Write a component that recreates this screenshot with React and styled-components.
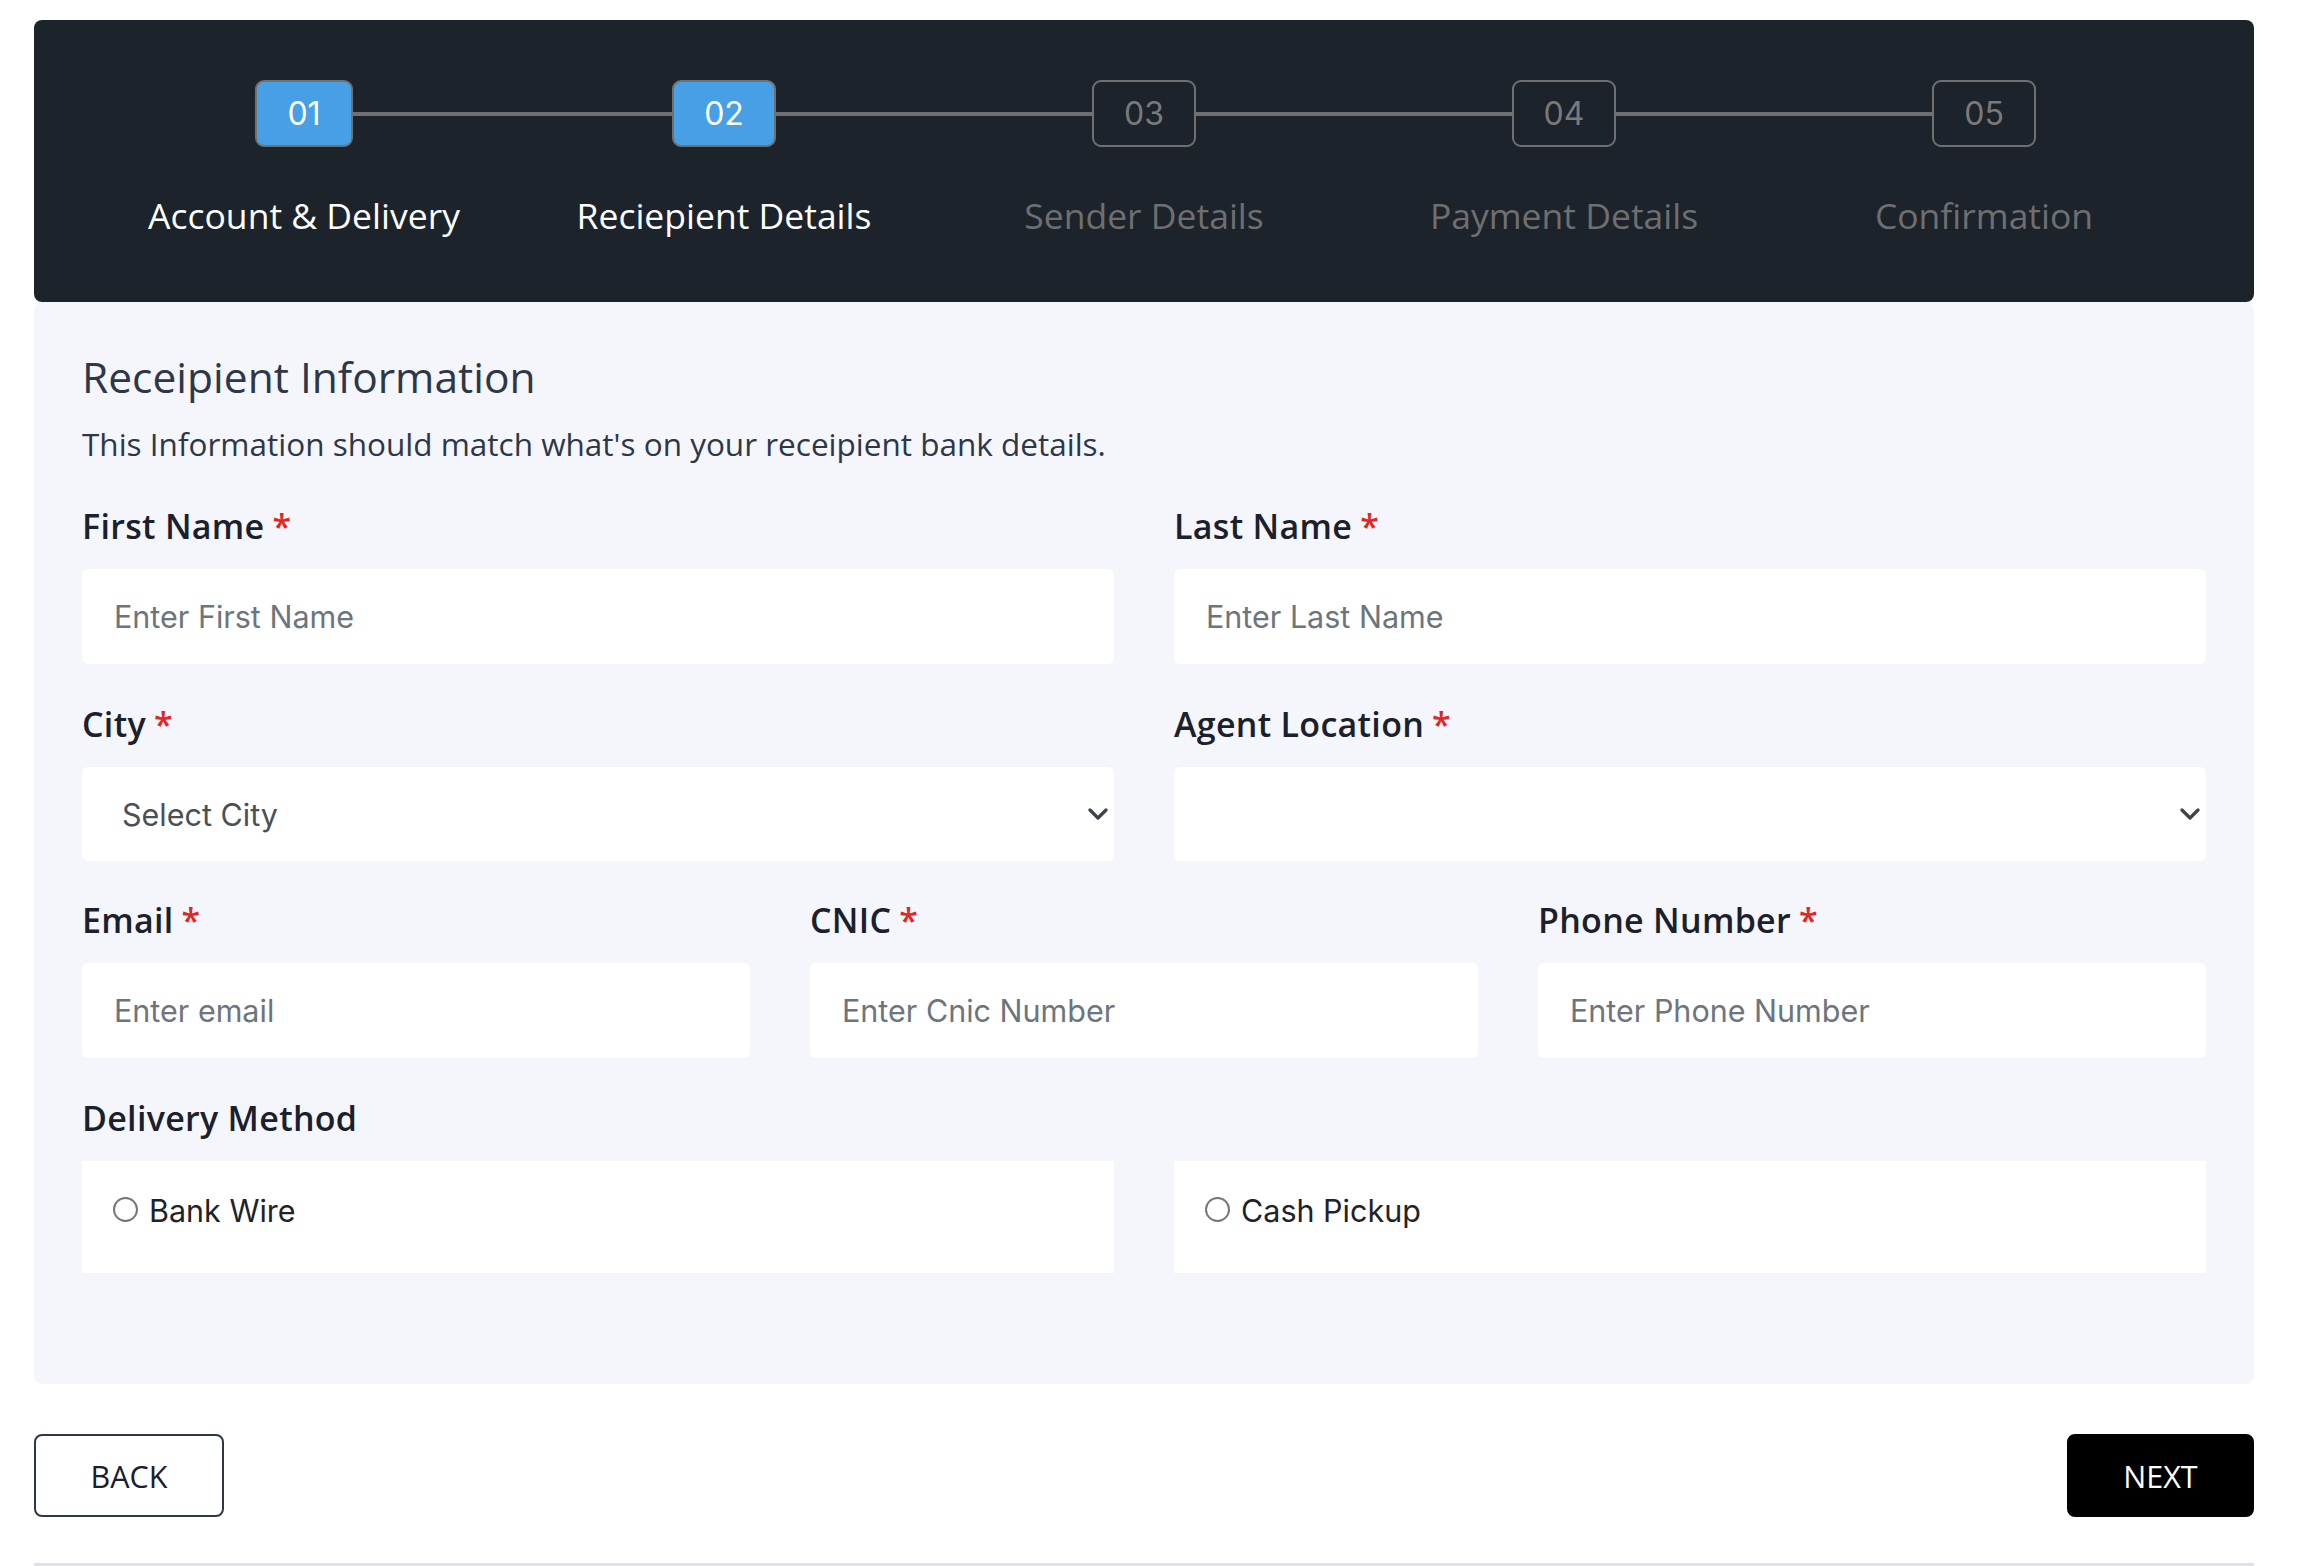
import React from "react";
import styled, { createGlobalStyle } from "styled-components";

const GlobalStyle = createGlobalStyle`
  html, body { margin: 0; padding: 0; background: #ffffff; }
  body { font-family: "Open Sans", "Noto Sans", sans-serif; }
  * { box-sizing: border-box; }
`;

const Page = styled.div`
  width: 2324px;
  padding: 20px 70px 0 34px;
`;

const Header = styled.div`
  background: #1c232b;
  border-radius: 8px;
  padding: 60px 60px 65px;
  display: grid;
  grid-template-columns: repeat(5, 1fr);
`;

const Step = styled.div`
  display: flex;
  flex-direction: column;
  align-items: center;
`;

const StepTrack = styled.div`
  display: flex;
  align-items: center;
  width: 100%;
`;

const Connector = styled.div`
  flex: 1;
  height: 4px;
  background: ${(p) => (p.$hidden ? "transparent" : "#707070")};
`;

const StepBox = styled.div`
  height: 67px;
  padding: 0 30px;
  border: 2px solid #707070;
  border-radius: 9px;
  display: flex;
  align-items: center;
  justify-content: center;
  font-family: "Inter", "Liberation Sans", sans-serif;
  font-size: 32px;
  color: ${(p) => (p.$active ? "#ffffff" : "#7a7a7a")};
  background: ${(p) => (p.$active ? "#47a0e5" : "transparent")};
`;

const StepLabel = styled.div`
  margin-top: 46px;
  font-size: 35.5px;
  line-height: 44px;
  color: ${(p) => (p.$active ? "#ffffff" : "#6f6f6f")};
  white-space: nowrap;
`;

const Panel = styled.div`
  background: #f5f6fb;
  border-radius: 8px;
  padding: 50px 48px 111px;
`;

const Title = styled.h2`
  margin: 0;
  font-size: 42.5px;
  line-height: 50px;
  font-weight: 400;
  color: #2d3748;
`;

const Subtitle = styled.p`
  margin: 22px 0 0;
  font-size: 31.5px;
  line-height: 40px;
  color: #2d3748;
`;

const Grid = styled.div`
  display: grid;
  grid-template-columns: repeat(${(p) => p.$cols}, 1fr);
  column-gap: 60px;
  margin-top: ${(p) => p.$top}px;
`;

const Field = styled.div`
  display: flex;
  flex-direction: column;
`;

const Label = styled.label`
  font-size: 34px;
  line-height: 40px;
  font-weight: 600;
  letter-spacing: 0.3px;
  color: #1a202c;
  margin-bottom: 23px;
  white-space: nowrap;
`;

const Req = styled.span`
  color: #e3261f;
  margin-left: 8px;
`;

const Input = styled.input`
  height: 95px;
  border: none;
  border-radius: 6px;
  background: #ffffff;
  padding: 0 32px;
  font-family: "Inter", "Liberation Sans", sans-serif;
  font-size: 30.5px;
  color: #212529;
  outline: none;
  &::placeholder { color: #6c757d; }
`;

const SelectWrap = styled.div`
  position: relative;
  height: 94px;
`;

const Select = styled.select`
  appearance: none;
  width: 100%;
  height: 100%;
  border: none;
  border-radius: 6px;
  background: #ffffff;
  padding: 0 40px;
  font-family: "Inter", "Liberation Sans", sans-serif;
  font-size: 30.5px;
  color: #495057;
  outline: none;
`;

const Chevron = styled.svg`
  position: absolute;
  right: 6px;
  top: 50%;
  transform: translateY(-50%);
  width: 20px;
  height: 12px;
  pointer-events: none;
`;

const RadioBox = styled.label`
  height: 112px;
  background: #ffffff;
  display: flex;
  align-items: center;
  padding: 0 31px 14px;
  gap: 11px;
  font-family: "Inter", "Liberation Sans", sans-serif;
  font-size: 30.5px;
  color: #1f2328;
`;

const Radio = styled.input`
  appearance: none;
  margin: 0 0 2px;
  width: 25px;
  height: 25px;
  border: 2px solid #767676;
  border-radius: 50%;
  background: #ffffff;
`;

const Actions = styled.div`
  display: flex;
  justify-content: space-between;
  margin-top: 50px;
`;

const Button = styled.button`
  height: 83px;
  width: ${(p) => p.$w}px;
  border-radius: 8px;
  border: 2px solid ${(p) => (p.$primary ? "#000000" : "#2d3748")};
  background: ${(p) => (p.$primary ? "#000000" : "#ffffff")};
  color: ${(p) => (p.$primary ? "#ffffff" : "#1a202c")};
  font-family: "Open Sans", "Noto Sans", sans-serif;
  font-size: 30.5px;
  cursor: pointer;
`;

const Divider = styled.div`
  margin-top: 46px;
  height: 3px;
  background: #dee2e6;
`;

const steps = [
  { n: "01", label: "Account & Delivery", active: true },
  { n: "02", label: "Reciepient Details", active: true },
  { n: "03", label: "Sender Details", active: false },
  { n: "04", label: "Payment Details", active: false },
  { n: "05", label: "Confirmation", active: false },
];

const ChevronIcon = () => (
  <Chevron viewBox="0 0 20 12">
    <path d="M2 2 L10 10 L18 2" fill="none" stroke="#3d434a" strokeWidth="3.2" strokeLinecap="round" strokeLinejoin="round" />
  </Chevron>
);

export default function App() {
  return (
    <>
      <GlobalStyle />
      <Page>
        <Header>
          {steps.map((s, i) => (
            <Step key={s.n}>
              <StepTrack>
                <Connector $hidden={i === 0} />
                <StepBox $active={s.active}>{s.n}</StepBox>
                <Connector $hidden={i === steps.length - 1} />
              </StepTrack>
              <StepLabel $active={s.active}>{s.label}</StepLabel>
            </Step>
          ))}
        </Header>
        <Panel>
          <Title>Receipient Information</Title>
          <Subtitle>This Information should match what's on your receipient bank details.</Subtitle>
          <Grid $cols={2} $top={42}>
            <Field>
              <Label>First Name<Req>*</Req></Label>
              <Input placeholder="Enter First Name" />
            </Field>
            <Field>
              <Label>Last Name<Req>*</Req></Label>
              <Input placeholder="Enter Last Name" />
            </Field>
          </Grid>
          <Grid $cols={2} $top={40}>
            <Field>
              <Label>City<Req>*</Req></Label>
              <SelectWrap>
                <Select defaultValue="">
                  <option value="">Select City</option>
                </Select>
                <ChevronIcon />
              </SelectWrap>
            </Field>
            <Field>
              <Label>Agent Location<Req>*</Req></Label>
              <SelectWrap>
                <Select defaultValue="">
                  <option value=""></option>
                </Select>
                <ChevronIcon />
              </SelectWrap>
            </Field>
          </Grid>
          <Grid $cols={3} $top={39}>
            <Field>
              <Label>Email<Req>*</Req></Label>
              <Input placeholder="Enter email" />
            </Field>
            <Field>
              <Label>CNIC<Req>*</Req></Label>
              <Input placeholder="Enter Cnic Number" />
            </Field>
            <Field>
              <Label>Phone Number<Req>*</Req></Label>
              <Input placeholder="Enter Phone Number" />
            </Field>
          </Grid>
          <Grid $cols={1} $top={40}>
            <Label>Delivery Method</Label>
          </Grid>
          <Grid $cols={2} $top={0}>
            <RadioBox>
              <Radio type="radio" name="delivery" />
              Bank Wire
            </RadioBox>
            <RadioBox>
              <Radio type="radio" name="delivery" />
              Cash Pickup
            </RadioBox>
          </Grid>
        </Panel>
        <Actions>
          <Button $w={190}>BACK</Button>
          <Button $w={187} $primary>NEXT</Button>
        </Actions>
        <Divider />
      </Page>
    </>
  );
}
